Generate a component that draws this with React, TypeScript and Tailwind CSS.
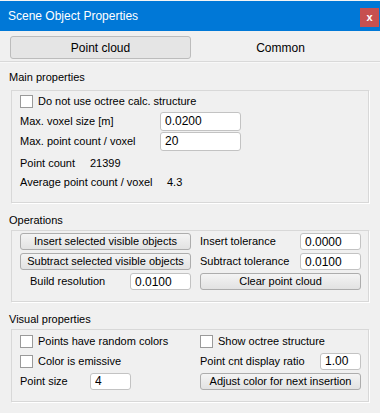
import React, { useState } from 'react';

const font = "font-['Liberation_Sans',Arial,sans-serif]";

const Check = ({ checked, onChange, label }: { checked: boolean; onChange: () => void; label: string }) => (
    <label className="flex items-center gap-[5px] cursor-default select-none whitespace-nowrap">
        <span
            onClick={onChange}
            className="w-[13px] h-[13px] bg-white border border-[#9a9a9a] flex items-center justify-center text-[10px] leading-none"
        >
            {checked ? '✓' : ''}
        </span>
        <span>{label}</span>
    </label>
);

const Field = ({ value, onChange, className }: { value: string; onChange: (v: string) => void; className: string }) => (
    <input
        value={value}
        onChange={(e) => onChange(e.target.value)}
        className={`bg-white border border-[#c3c3c3] rounded-[3px] px-[4px] text-[12px] text-black outline-none ${className}`}
    />
);

const Btn = ({ children, className }: { children: React.ReactNode; className: string }) => (
    <button className={`h-[17px] border border-[#adadad] rounded-[3px] bg-linear-to-b from-[#f4f4f4] to-[#e2e2e2] leading-none text-black whitespace-nowrap ${className}`}>
        {children}
    </button>
);

const SectionLabel = ({ text, top }: { text: string; top: string }) => (
    <div className={`h-[27px] pl-[9px] leading-[14px] ${top}`}>{text}</div>
);

const Group = ({ children, className }: { children: React.ReactNode; className: string }) => (
    <div className={`mx-[11px] border border-[#d8d8d8] shadow-[1px_1px_0_#ffffff] ${className}`}>{children}</div>
);

const App = () => {
    const [tab, setTab] = useState<'cloud' | 'common'>('cloud');
    const [noOctree, setNoOctree] = useState(false);
    const [voxelSize, setVoxelSize] = useState('0.0200');
    const [maxCount, setMaxCount] = useState('20');
    const [insertTol, setInsertTol] = useState('0.0000');
    const [subtractTol, setSubtractTol] = useState('0.0100');
    const [buildRes, setBuildRes] = useState('0.0100');
    const [randomColors, setRandomColors] = useState(false);
    const [showOctree, setShowOctree] = useState(false);
    const [emissive, setEmissive] = useState(false);
    const [ratio, setRatio] = useState('1.00');
    const [pointSize, setPointSize] = useState('4');

    return (
        <div className={`w-[380px] h-[413px] bg-[#f0f0f0] text-[11px] text-black overflow-hidden ${font}`}>
            {/* title bar */}
            <div className="h-[31px] bg-[#0078d7] flex items-start justify-between border-t border-[#f4f4f4]">
                <span className="pl-[8px] pt-[7px] text-white text-[12px] leading-[16px]">Scene Object Properties</span>
                <button className="mt-[7px] mr-[1px] w-[19px] h-[19px] bg-[#c75050] text-white text-[11px] font-bold leading-none">
                    x
                </button>
            </div>

            {/* tabs */}
            <div className="px-[10px] pt-[5px] grid grid-cols-[181px_1fr] h-[30px]">
                <button
                    onClick={() => setTab('cloud')}
                    className={`h-[23px] rounded-[3px] text-[12px] ${tab === 'cloud' ? 'bg-[#e5e5e5] border border-[#bcbcbc]' : ''}`}
                >
                    Point cloud
                </button>
                <button
                    onClick={() => setTab('common')}
                    className={`h-[23px] rounded-[3px] text-[12px] ${tab === 'common' ? 'bg-[#e5e5e5] border border-[#bcbcbc]' : ''}`}
                >
                    Common
                </button>
            </div>
            <div className="h-[2px] border-t border-[#d9d9d9] border-b border-b-[#f8f8f8]" />

            {/* main properties */}
            <SectionLabel text="Main properties" top="pt-[7px]" />
            <Group className="h-[113px] px-[8px]">
                <div className="h-[20px] flex items-center">
                    <Check checked={noOctree} onChange={() => setNoOctree(!noOctree)} label="Do not use octree calc. structure" />
                </div>
                <div className="h-[20px] flex items-center">
                    <span className="w-[140px]">Max. voxel size [m]</span>
                    <Field value={voxelSize} onChange={setVoxelSize} className="w-[81px] h-[19px]" />
                </div>
                <div className="h-[20px] flex items-center">
                    <span className="w-[140px]">Max. point count / voxel</span>
                    <Field value={maxCount} onChange={setMaxCount} className="w-[81px] h-[19px]" />
                </div>
                <div className="h-[20px] mt-[2px] flex items-center">
                    <span className="w-[70px]">Point count</span>
                    <span>21399</span>
                </div>
                <div className="h-[19px] flex items-center">
                    <span className="w-[147px]">Average point count / voxel</span>
                    <span>4.3</span>
                </div>
            </Group>

            {/* operations */}
            <SectionLabel text="Operations" top="pt-[10px]" />
            <Group className="h-[72px] pl-[8px] pr-[8px] pt-[2px]">
                <div className="grid grid-cols-[171px_161px] gap-x-[9px] gap-y-[3px]">
                    <Btn className="w-full">Insert selected visible objects</Btn>
                    <div className="flex items-center h-[17px]">
                        <span className="w-[100px]">Insert tolerance</span>
                        <Field value={insertTol} onChange={setInsertTol} className="w-[61px] h-[17px]" />
                    </div>
                    <Btn className="w-full">Subtract selected visible objects</Btn>
                    <div className="flex items-center h-[17px]">
                        <span className="w-[100px]">Subtract tolerance</span>
                        <Field value={subtractTol} onChange={setSubtractTol} className="w-[61px] h-[17px]" />
                    </div>
                    <div className="flex items-center h-[17px] pl-[10px]">
                        <span className="w-[100px]">Build resolution</span>
                        <Field value={buildRes} onChange={setBuildRes} className="w-[61px] h-[17px]" />
                    </div>
                    <Btn className="w-full">Clear point cloud</Btn>
                </div>
            </Group>

            {/* visual properties */}
            <SectionLabel text="Visual properties" top="pt-[10px]" />
            <Group className="h-[73px] pl-[8px] pr-[8px] pt-[1px]">
                <div className="grid grid-cols-[171px_161px] gap-x-[9px] auto-rows-[20px]">
                    <div className="flex items-center">
                        <Check checked={randomColors} onChange={() => setRandomColors(!randomColors)} label="Points have random colors" />
                    </div>
                    <div className="flex items-center">
                        <Check checked={showOctree} onChange={() => setShowOctree(!showOctree)} label="Show octree structure" />
                    </div>
                    <div className="flex items-center">
                        <Check checked={emissive} onChange={() => setEmissive(!emissive)} label="Color is emissive" />
                    </div>
                    <div className="flex items-center">
                        <span className="w-[120px]">Point cnt display ratio</span>
                        <Field value={ratio} onChange={setRatio} className="w-[41px] h-[17px]" />
                    </div>
                    <div className="flex items-center">
                        <span className="w-[70px]">Point size</span>
                        <Field value={pointSize} onChange={setPointSize} className="w-[41px] h-[17px]" />
                    </div>
                    <div className="flex items-center">
                        <Btn className="w-full">Adjust color for next insertion</Btn>
                    </div>
                </div>
            </Group>
        </div>
    );
};

export default App;
